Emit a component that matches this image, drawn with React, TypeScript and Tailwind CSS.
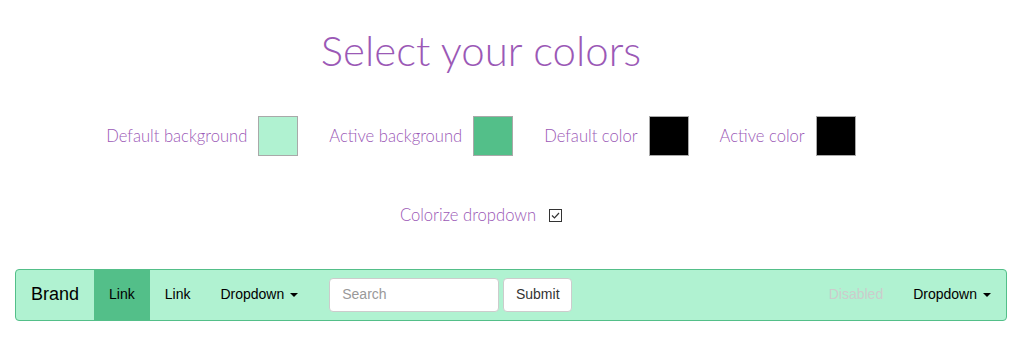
import React from "react";

function Swatch({ color }: { color: string }) {
  return <div className="w-[40px] h-[40px] border border-[#a9a9a9]" style={{ backgroundColor: color }} />;
}

function Caret() {
  return (
    <span className="inline-block w-0 h-0 ml-[6px] align-middle border-t-[4px] border-t-black border-x-[4px] border-x-transparent" />
  );
}

export default function App() {
  const labelCls = "text-[16.6px] text-[#9b59b6] font-light";
  return (
    <div className="w-[1030px] h-[338px] bg-white" style={{ fontFamily: "Lato, 'Noto Sans', sans-serif" }}>
      <div className="w-[962px] flex flex-col items-center">
        <h1 className="mt-[24px] h-[52px] text-[42px] leading-[52px] font-light text-[#9b59b6]">Select your colors</h1>
        <div className="mt-[40px] flex items-center">
          <span className={labelCls}>Default background</span>
          <div className="ml-[11px]"><Swatch color="#b0f2d1" /></div>
          <span className={labelCls + " ml-[31px]"}>Active background</span>
          <div className="ml-[11px]"><Swatch color="#53bf89" /></div>
          <span className={labelCls + " ml-[31px]"}>Default color</span>
          <div className="ml-[11px]"><Swatch color="#000000" /></div>
          <span className={labelCls + " ml-[31px]"}>Active color</span>
          <div className="ml-[11px]"><Swatch color="#000000" /></div>
        </div>
        <div className="mt-[47px] flex items-center">
          <span className={labelCls}>Colorize dropdown</span>
          <span className="ml-[13px] w-[13px] h-[13px] border border-[#333] flex items-center justify-center">
            <svg width="11" height="11" viewBox="0 0 11 11"><path d="M2 5.5 L4.5 8 L9 3" fill="none" stroke="#333" strokeWidth="1.2" /></svg>
          </span>
        </div>
      </div>
      <nav
        className="ml-[15px] mt-[41px] w-[992px] h-[52px] border border-[#53bf89] rounded-[4px] bg-[#b0f2d1] flex items-stretch text-[14px] text-black"
        style={{ fontFamily: "'Liberation Sans', Arial, sans-serif" }}
      >
        <div className="px-[15px] flex items-center text-[18px]">Brand</div>
        <div className="px-[15px] flex items-center bg-[#53bf89]">Link</div>
        <div className="px-[15px] flex items-center">Link</div>
        <div className="px-[15px] flex items-center">Dropdown<Caret /></div>
        <div className="pl-[16px] pr-[15px] flex items-center">
          <div className="w-[170px] h-[34px] bg-white border border-[#ccc] rounded-[4px] px-[12px] flex items-center text-[#999]">Search</div>
          <div className="ml-[4px] w-[69px] h-[34px] bg-white border border-[#ccc] rounded-[4px] flex items-center justify-center text-[#333]">Submit</div>
        </div>
        <div className="flex-1" />
        <div className="px-[15px] flex items-center text-[#cccccc]">Disabled</div>
        <div className="px-[15px] flex items-center">Dropdown<Caret /></div>
      </nav>
    </div>
  );
}
